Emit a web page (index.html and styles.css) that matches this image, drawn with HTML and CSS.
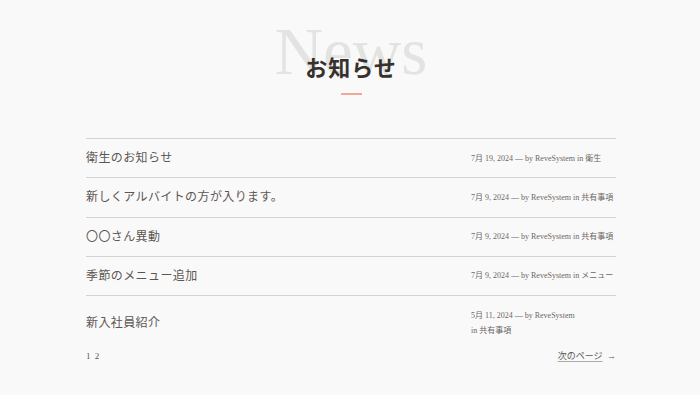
FILE: index.html
```html
<!DOCTYPE html>
<html lang="ja">
<head>
    <meta charset="UTF-8">
    <meta name="viewport" content="width=device-width, initial-scale=1.0">
    <title>お知らせ</title>
    <link rel="stylesheet" href="styles.css">
</head>
<body>
    <section class="news">
        <div class="heading">
            <span class="heading-bg">News</span>
            <h2 class="heading-title">お知らせ</h2>
            <span class="heading-line"></span>
        </div>

        <ul class="news-list">
            <li class="news-item">
                <a class="news-title" href="#">衛生のお知らせ</a>
                <div class="news-meta">7月 19, 2024 — by ReveSystem <span class="news-cat">in 衛生</span></div>
            </li>
            <li class="news-item">
                <a class="news-title" href="#">新しくアルバイトの方が入ります。</a>
                <div class="news-meta">7月 9, 2024 — by ReveSystem <span class="news-cat">in 共有事項</span></div>
            </li>
            <li class="news-item">
                <a class="news-title" href="#">〇〇さん異動</a>
                <div class="news-meta">7月 9, 2024 — by ReveSystem <span class="news-cat">in 共有事項</span></div>
            </li>
            <li class="news-item">
                <a class="news-title" href="#">季節のメニュー追加</a>
                <div class="news-meta">7月 9, 2024 — by ReveSystem <span class="news-cat">in メニュー</span></div>
            </li>
            <li class="news-item">
                <a class="news-title" href="#">新入社員紹介</a>
                <div class="news-meta">5月 11, 2024 — by ReveSystem <span class="news-cat">in 共有事項</span></div>
            </li>
        </ul>

        <div class="pager">
            <div class="pager-pages"><span>1</span> <a href="#">2</a></div>
            <a class="pager-next" href="#"><span class="pager-next-label">次のページ</span>&nbsp; →</a>
        </div>
    </section>
</body>
</html>
```

FILE: styles.css
```css
body {
    margin: 0;
    background: #faf9f9;
    color: #555;
    font-family: "Liberation Serif", "Noto Sans CJK JP", serif;
}
a {
    color: inherit;
    text-decoration: none;
}
.news {
    padding: 0 84px 0 86px;
}
.heading {
    position: relative;
    padding-top: 56px;
    text-align: center;
}
.heading-bg {
    position: absolute;
    top: 18px;
    left: 0;
    right: 0;
    font-size: 67px;
    line-height: 66px;
    color: #e3e3e1;
}
.heading-title {
    position: relative;
    margin: 0;
    font-size: 22px;
    line-height: 26px;
    font-weight: bold;
    color: #36312c;
    letter-spacing: 1px;
}
.heading-line {
    display: block;
    width: 21px;
    height: 2px;
    margin: 11px auto 0;
    background: #eea898;
}
.news-list {
    list-style: none;
    margin: 43px 0 0;
    padding: 0;
}
.news-item {
    display: flex;
    align-items: center;
    justify-content: space-between;
    padding: 10px 0 10.25px;
    border-top: 1px solid #d4d4d4;
}
.news-item:last-child {
    padding: 12px 0 9px;
}
.news-title {
    font-size: 12px;
    line-height: 18px;
    letter-spacing: 0.4px;
    color: #5a5652;
}
.news-meta {
    width: 145px;
    font-size: 8px;
    line-height: 15px;
    color: #6a6764;
}
.news-cat {
    white-space: nowrap;
}
.pager {
    display: flex;
    justify-content: space-between;
    align-items: center;
    padding-top: 1px;
    font-size: 9px;
    line-height: 16px;
    color: #5a5652;
}
.pager-pages {
    letter-spacing: 1px;
}
.pager-next-label {
    text-decoration: underline;
    text-decoration-color: #aaa;
    text-underline-offset: 2px;
}
```
